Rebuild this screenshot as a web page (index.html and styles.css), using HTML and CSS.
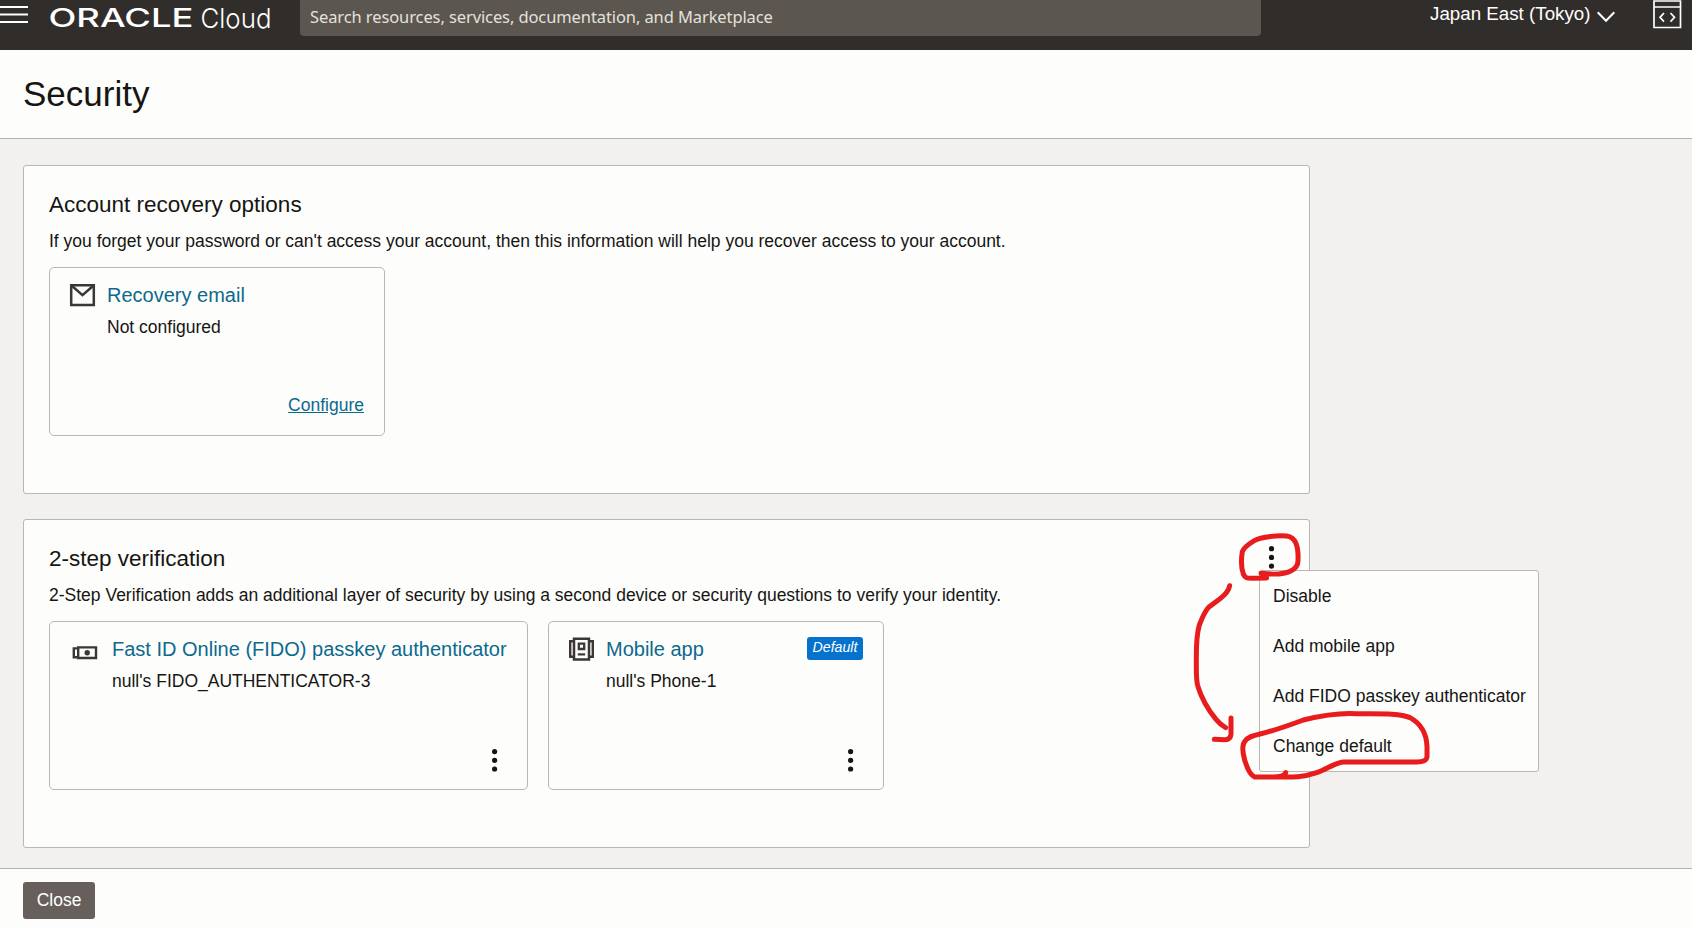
FILE: index.html
```html
<!DOCTYPE html>
<html lang="en">

<head>
  <meta charset="UTF-8">
  <title>Security</title>
  <link rel="stylesheet" href="styles.css">
</head>

<body>
  <header class="topbar">
    <svg class="menu-icon" width="28" height="24" viewBox="0 0 28 24">
      <path d="M0 7H28M0 14.5H28M0 22H28" stroke="#fff" stroke-width="2" />
    </svg>
    <svg class="logo" width="224" height="36" viewBox="0 0 224 36">
      <text class="logo-oracle" x="-1.5" y="27" textLength="145" lengthAdjust="spacingAndGlyphs">ORACLE</text>
      <text class="logo-cloud" x="150.5" y="27.5" textLength="71" lengthAdjust="spacingAndGlyphs">Cloud</text>
    </svg>
    <div class="search"><span>Search resources, services, documentation, and Marketplace</span></div>
    <div class="region">
      <span>Japan East (Tokyo)</span>
      <svg width="18" height="12" viewBox="0 0 18 12">
        <path d="M0.7 1.2L9 9.8L17.3 1.2" fill="none" stroke="#fff" stroke-width="2" />
      </svg>
    </div>
    <svg class="dev-icon" width="29" height="29" viewBox="0 0 29 29">
      <path d="M1 1H27.5V27.5H1ZM1 7H27.5" fill="none" stroke="#fff" stroke-width="1.7" />
      <path d="M11 13L7 17.3L11 21.6M17.5 13L21.5 17.3L17.5 21.6" fill="none" stroke="#fff" stroke-width="1.7" />
    </svg>
  </header>

  <div class="page-title">
    <h1>Security</h1>
  </div>

  <main class="content">
    <section class="panel">
      <h2>Account recovery options</h2>
      <p class="desc">If you forget your password or can't access your account, then this information will help you recover access to your account.</p>
      <div class="cards">
        <div class="card">
          <div class="card-head">
            <svg class="card-icon" width="25" height="25" viewBox="0 0 25 25">
              <path d="M1.2 2.2H23.8V22H1.2Z" fill="none" stroke="#3a3735" stroke-width="2.5" />
              <path d="M1.5 2.5L12.5 12.2L23.5 2.5" fill="none" stroke="#3a3735" stroke-width="2.5" />
            </svg>
            <h3>Recovery email</h3>
          </div>
          <p class="status">Not configured</p>
          <div class="card-foot"><a href="#" class="link">Configure</a></div>
        </div>
      </div>
    </section>

    <section class="panel">
      <h2>2-step verification</h2>
      <p class="desc">2-Step Verification adds an additional layer of security by using a second device or security questions to verify your identity.</p>
      <div class="cards">
        <div class="card card-fido">
          <div class="card-head">
            <svg class="card-icon" width="25" height="25" viewBox="0 0 25 25">
              <path d="M8.2 10.4H26V21H8.2Z" fill="none" stroke="#3a3735" stroke-width="2.4" />
              <path d="M7 11.4H3.8V20.2H7" fill="none" stroke="#3a3735" stroke-width="2.4" />
              <circle cx="17.2" cy="15.8" r="2.7" fill="#3a3735" />
            </svg>
            <h3>Fast ID Online (FIDO) passkey authenticator</h3>
          </div>
          <p class="status">null's FIDO_AUTHENTICATOR-3</p>
          <div class="card-foot">
            <svg class="dots" width="6" height="24" viewBox="0 0 6 24">
              <circle cx="2.6" cy="3.6" r="2.6" />
              <circle cx="2.6" cy="12.3" r="2.6" />
              <circle cx="2.6" cy="21" r="2.6" />
            </svg>
          </div>
        </div>

        <div class="card">
          <div class="card-head">
            <svg class="card-icon" width="25" height="25" viewBox="0 0 25 25">
              <path d="M5 1.8H20V22.4H5Z" fill="none" stroke="#3a3735" stroke-width="2.5" />
              <path d="M5 4.2H1.2V19.8H5M20 4.2H23.8V19.8H20" fill="none" stroke="#3a3735" stroke-width="2.4" />
              <path d="M9.8 6.6H15.2V12H9.8Z" fill="none" stroke="#3a3735" stroke-width="2.3" />
              <path d="M8.8 17.4H16.2" stroke="#3a3735" stroke-width="2.2" />
            </svg>
            <h3>Mobile app</h3>
            <span class="badge">Default</span>
          </div>
          <p class="status">null's Phone-1</p>
          <div class="card-foot">
            <svg class="dots" width="6" height="24" viewBox="0 0 6 24">
              <circle cx="2.6" cy="3.6" r="2.6" />
              <circle cx="2.6" cy="12.3" r="2.6" />
              <circle cx="2.6" cy="21" r="2.6" />
            </svg>
          </div>
        </div>
      </div>

      <svg class="dots panel-dots" width="6" height="24" viewBox="0 0 6 24">
        <circle cx="2.5" cy="2.7" r="2.6" />
        <circle cx="2.5" cy="11.4" r="2.6" />
        <circle cx="2.5" cy="20.1" r="2.6" />
      </svg>
      <ul class="dropdown">
        <li>Disable</li>
        <li>Add mobile app</li>
        <li>Add FIDO passkey authenticator</li>
        <li>Change default</li>
      </ul>
    </section>
  </main>

  <footer class="footer">
    <button type="button" class="btn">Close</button>
  </footer>

  <!-- Hand drawn marks over the menu -->
  <svg class="marks" width="260" height="270" viewBox="0 0 780 810">
    <path d="M303 130C330 133 370 135 392 123C408 115 414 105 414 92C415 70 414 55 408 40C402 26 395 20 380 18C350 15 300 22 283 32C265 43 250 54 247 65C243 90 244 115 250 132C255 145 262 145 275 145L320 144" />
    <path d="M209 167C206 185 195 195 180 206L146 232C134 244 126 265 118 285C108 320 109 350 109 390C109 430 108 455 114 470C125 505 145 540 168 568C178 580 186 587 197 593M213 564V612C212 624 206 629 195 629L163 628" />
    <path d="M377 728C372 740 358 741 340 741L284 741C270 735 260 710 254 690C248 668 246 645 254 635C264 619 283 616 300 612C350 600 390 585 430 570C490 555 540 548 590 551C650 552 715 548 750 563C790 585 800 620 801 650V680C800 692 790 695 770 696L550 696C520 700 500 718 470 728C430 742 400 742 350 741" />
  </svg>
</body>

</html>
```
FILE: styles.css
```css
* {
  box-sizing: border-box;
}

body {
  margin: 0;
  height: 927px;
  overflow: hidden;
  display: flex;
  flex-direction: column;
  position: relative;
  font-family: "Liberation Sans", Arial, sans-serif;
  font-size: 17.5px;
  line-height: 25px;
  color: #161513;
  background: #f2f1f0;
}

h1,
h2,
h3,
p,
ul {
  margin: 0;
  padding: 0;
  font-weight: normal;
}

svg {
  display: block;
  flex-shrink: 0;
  overflow: visible;
}

/* top bar */
.topbar {
  height: 50px;
  flex-shrink: 0;
  display: flex;
  align-items: flex-start;
  background: #312d2a;
  color: #fff;
}

.logo {
  margin-left: 22px;
}

.logo text {
  fill: #fff;
}

.logo-oracle {
  font-family: Inter, sans-serif;
  font-size: 25px;
  font-weight: 500;
}

.logo-cloud {
  font-family: Inter, sans-serif;
  font-size: 27px;
  font-weight: 300;
}

.search {
  width: 961px;
  height: 36px;
  margin-left: 26px;
  padding: 5px 10px;
  border-radius: 0 0 4px 4px;
  background: #5b564f;
  color: #e4e1dd;
  font-family: "Noto Sans", sans-serif;
  font-size: 16.5px;
  letter-spacing: -0.1px;
  line-height: 24px;
  white-space: nowrap;
}

.region {
  display: flex;
  align-items: center;
  gap: 6px;
  margin-left: 169px;
  height: 26px;
  font-size: 18.75px;
  white-space: nowrap;
}

.region svg {
  margin-top: 7px;
}

.dev-icon {
  margin-left: auto;
  margin-right: 10px;
}

/* title */
.page-title {
  height: 89px;
  flex-shrink: 0;
  padding: 22px 23px 0;
  background: #fdfdfb;
  border-bottom: 1px solid #b5b1ae;
}

h1 {
  font-size: 35px;
  line-height: 44px;
}

/* panels */
.content {
  flex: 1;
  padding: 26px 23px 0;
  display: flex;
  flex-direction: column;
  gap: 25px;
}

.panel {
  position: relative;
  width: 1287px;
  height: 329px;
  padding: 24px 25px;
  background: #fdfdfb;
  border: 1px solid #bab6b2;
  border-radius: 3px;
}

h2 {
  font-size: 22.5px;
  line-height: 30px;
}

.desc {
  margin-top: 9px;
}

.cards {
  display: flex;
  gap: 20px;
  margin-top: 13px;
}

.card {
  width: 336px;
  height: 169px;
  padding: 15px 20px 17px;
  display: flex;
  flex-direction: column;
  border: 1px solid #bab6b2;
  border-radius: 5px;
}

.card-fido {
  width: 479px;
}

.card-head {
  display: flex;
}

h3 {
  margin-left: 12px;
  font-size: 20px;
  line-height: 25px;
  color: #0c698e;
  white-space: nowrap;
}

.card-fido h3 {
  margin-left: 17px;
}

.status {
  margin: 7px 0 0 37px;
}

.card-fido .status {
  margin-left: 42px;
}

.badge {
  width: 56px;
  height: 23px;
  margin-left: auto;
  border-radius: 3px;
  background: #0572ce;
  color: #fff;
  font-size: 14.2px;
  font-style: italic;
  line-height: 21px;
  text-align: center;
}

.card-foot {
  display: flex;
  justify-content: flex-end;
  margin-top: auto;
}

.link {
  color: #0c698e;
}

.dots {
  fill: #161513;
}

.card-foot .dots {
  margin-right: 9px;
}

.panel-dots {
  position: absolute;
  top: 26px;
  right: 34px;
}

.dropdown {
  position: absolute;
  left: 1235px;
  top: 50px;
  width: 280px;
  background: #fdfdfb;
  border: 1px solid #bab6b2;
  border-radius: 3px;
  list-style: none;
}

.dropdown li {
  padding-left: 13px;
  line-height: 50px;
  white-space: nowrap;
}

/* footer */
.footer {
  height: 59px;
  flex-shrink: 0;
  padding: 13px 23px;
  background: #fdfdfb;
  border-top: 1px solid #b5b1ae;
}

.btn {
  display: block;
  width: 72px;
  height: 37px;
  padding: 0;
  border: none;
  border-radius: 3px;
  background: #665f5b;
  color: #fff;
  font-family: inherit;
  font-size: 17.5px;
}

.marks {
  position: absolute;
  left: 1160px;
  top: 530px;
  fill: none;
  stroke: #e81c1c;
  stroke-width: 15;
  stroke-linecap: round;
  stroke-linejoin: round;
}
```
